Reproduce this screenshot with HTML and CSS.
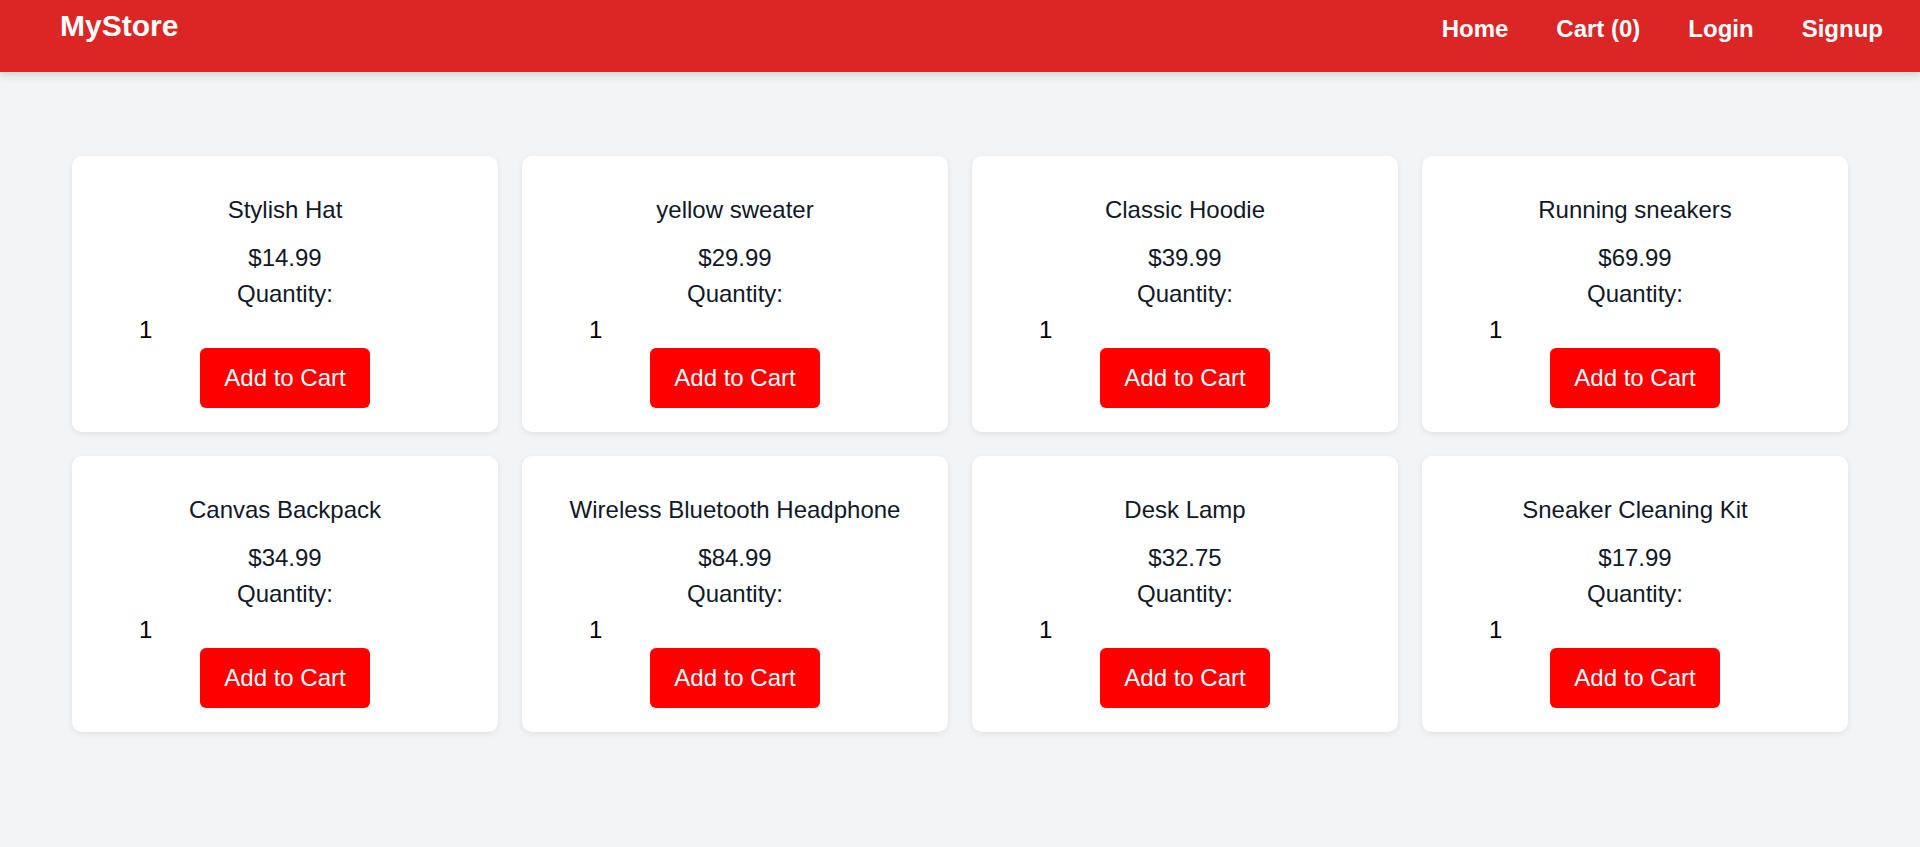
FILE: index.html
```html
<!DOCTYPE html>
<html lang="en">
<head>
<meta charset="utf-8">
<title>MyStore</title>
<link rel="stylesheet" href="styles.css">
</head>
<body>
<header class="topbar">
  <a class="logo" href="#">MyStore</a>
  <nav class="nav">
    <a href="#">Home</a>
    <a href="#">Cart (0)</a>
    <a href="#">Login</a>
    <a href="#">Signup</a>
  </nav>
</header>
<main class="content">
  <div class="grid">
    <div class="card">
      <h3 class="title">Stylish Hat</h3>
      <p class="line">$14.99</p>
      <p class="line">Quantity:</p>
      <input class="qty" type="number" value="1" min="1">
      <button class="add">Add to Cart</button>
    </div>
    <div class="card">
      <h3 class="title">yellow sweater</h3>
      <p class="line">$29.99</p>
      <p class="line">Quantity:</p>
      <input class="qty" type="number" value="1" min="1">
      <button class="add">Add to Cart</button>
    </div>
    <div class="card">
      <h3 class="title">Classic Hoodie</h3>
      <p class="line">$39.99</p>
      <p class="line">Quantity:</p>
      <input class="qty" type="number" value="1" min="1">
      <button class="add">Add to Cart</button>
    </div>
    <div class="card">
      <h3 class="title">Running sneakers</h3>
      <p class="line">$69.99</p>
      <p class="line">Quantity:</p>
      <input class="qty" type="number" value="1" min="1">
      <button class="add">Add to Cart</button>
    </div>
    <div class="card">
      <h3 class="title">Canvas Backpack</h3>
      <p class="line">$34.99</p>
      <p class="line">Quantity:</p>
      <input class="qty" type="number" value="1" min="1">
      <button class="add">Add to Cart</button>
    </div>
    <div class="card">
      <h3 class="title">Wireless Bluetooth Headphone</h3>
      <p class="line">$84.99</p>
      <p class="line">Quantity:</p>
      <input class="qty" type="number" value="1" min="1">
      <button class="add">Add to Cart</button>
    </div>
    <div class="card">
      <h3 class="title">Desk Lamp</h3>
      <p class="line">$32.75</p>
      <p class="line">Quantity:</p>
      <input class="qty" type="number" value="1" min="1">
      <button class="add">Add to Cart</button>
    </div>
    <div class="card">
      <h3 class="title">Sneaker Cleaning Kit</h3>
      <p class="line">$17.99</p>
      <p class="line">Quantity:</p>
      <input class="qty" type="number" value="1" min="1">
      <button class="add">Add to Cart</button>
    </div>
  </div>
</main>
</body>
</html>
```

FILE: styles.css
```css
* { box-sizing: border-box; }

html, body {
  margin: 0;
  padding: 0;
}

body {
  background: #f3f4f6;
  font-family: "Liberation Sans", Arial, sans-serif;
  color: #111827;
  min-height: 847px;
}

.topbar {
  height: 72px;
  background: #dc2626;
  display: flex;
  justify-content: space-between;
  align-items: flex-start;
  padding: 0 37px 0 60px;
  box-shadow: 0 4px 8px rgba(0, 0, 0, 0.12);
  position: relative;
  z-index: 1;
}

.logo {
  color: #ffffff;
  text-decoration: none;
  font-weight: 700;
  font-size: 30px;
  line-height: 34px;
  margin-top: 9px;
}

.nav {
  display: flex;
  gap: 48px;
  margin-top: 15px;
}

.nav a {
  color: #ffffff;
  text-decoration: none;
  font-weight: 700;
  font-size: 24px;
  line-height: 28px;
}

.content {
  padding: 84px 72px;
}

.grid {
  display: grid;
  grid-template-columns: repeat(4, 1fr);
  gap: 24px;
}

.card {
  background: #ffffff;
  border-radius: 10px;
  padding: 24px;
  text-align: center;
  box-shadow: 0 2px 6px rgba(0, 0, 0, 0.08);
}

.title {
  margin: 12px 0;
  font-size: 24px;
  font-weight: 400;
  line-height: 36px;
}

.line {
  margin: 0;
  font-size: 24px;
  line-height: 36px;
}

.qty {
  display: block;
  width: 100%;
  height: 36px;
  border: none;
  outline: none;
  background: transparent;
  padding: 0 0 0 43px;
  margin: 0;
  font-family: "Liberation Sans", Arial, sans-serif;
  font-size: 24px;
  line-height: 36px;
  color: #000000;
  text-align: left;
  -moz-appearance: textfield;
  appearance: textfield;
}

.qty::-webkit-outer-spin-button,
.qty::-webkit-inner-spin-button {
  -webkit-appearance: none;
  margin: 0;
}

.add {
  background: #ff0000;
  color: #ffffff;
  border: none;
  border-radius: 6px;
  padding: 12px 24px;
  font-family: "Liberation Sans", Arial, sans-serif;
  font-size: 24px;
  line-height: 36px;
  cursor: pointer;
}
```
